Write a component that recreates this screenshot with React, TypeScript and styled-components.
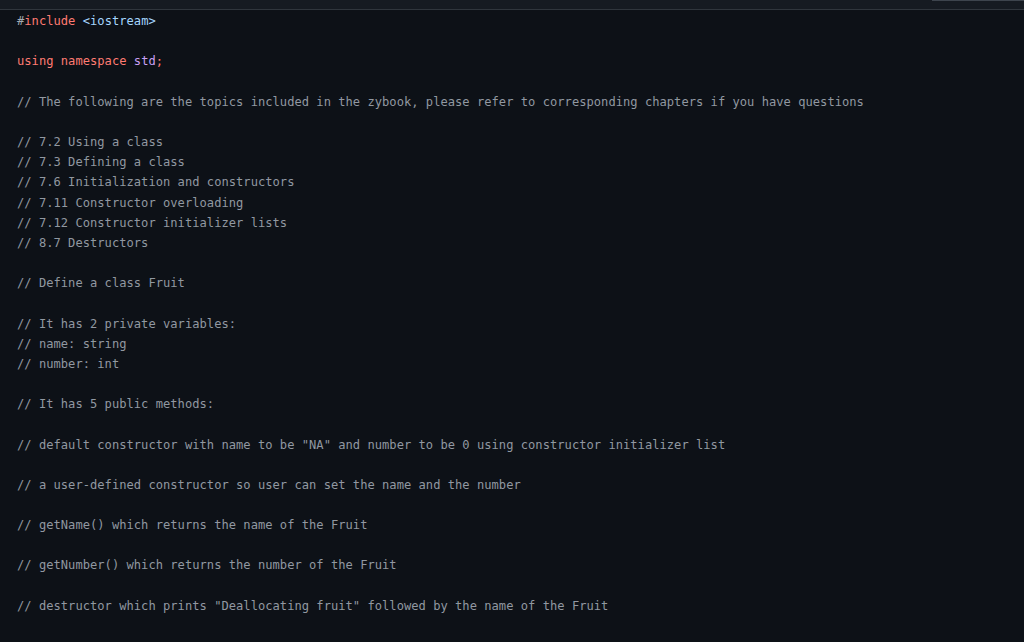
import React from "react";
import styled, { createGlobalStyle } from "styled-components";

const Global = createGlobalStyle`
  html, body { margin: 0; padding: 0; background: #0d1117; }
  body { width: 1024px; height: 642px; overflow: hidden; }
`;

const Page = styled.div`
  width: 1024px;
  height: 642px;
  background: #0d1117;
  display: flex;
  flex-direction: column;
`;

const TopBar = styled.div`
  height: 9px;
  background: #161b22;
  border-bottom: 1px solid #30363d;
  display: flex;
  justify-content: flex-end;
  align-items: flex-start;
`;

const TabEdge = styled.div`
  width: 92px;
  height: 1px;
  background: #3d444d;
`;

const Code = styled.pre`
  margin: 0;
  padding: 1px 17px 0;
  font-family: "DejaVu Sans Mono", "Liberation Mono", monospace;
  font-size: 12.1px;
  letter-spacing: 0.02px;
  line-height: 20.17px;
  color: #9198a1;
  white-space: pre;
`;

const Line = styled.div`
  min-height: 20.17px;
`;

const Tok = styled.span<{ $c: string }>`
  color: ${(p) => p.$c};
`;

const RED = "#ff7b72";
const BLUE = "#a5d6ff";
const PURPLE = "#c9a0f5";
const HASH = "#a3abb3";

const comments: string[] = [
  "// The following are the topics included in the zybook, please refer to corresponding chapters if you have questions",
  "",
  "// 7.2 Using a class",
  "// 7.3 Defining a class",
  "// 7.6 Initialization and constructors",
  "// 7.11 Constructor overloading",
  "// 7.12 Constructor initializer lists",
  "// 8.7 Destructors",
  "",
  "// Define a class Fruit",
  "",
  "// It has 2 private variables:",
  "// name: string",
  "// number: int",
  "",
  "// It has 5 public methods:",
  "",
  '// default constructor with name to be "NA" and number to be 0 using constructor initializer list',
  "",
  "// a user-defined constructor so user can set the name and the number",
  "",
  "// getName() which returns the name of the Fruit",
  "",
  "// getNumber() which returns the number of the Fruit",
  "",
  '// destructor which prints "Deallocating fruit" followed by the name of the Fruit',
];

export default function App() {
  return (
    <Page>
      <Global />
      <TopBar>
        <TabEdge />
      </TopBar>
      <Code>
        <Line>
          <Tok $c={HASH}>#</Tok>
          <Tok $c={RED}>include</Tok> <Tok $c={BLUE}>&lt;iostream&gt;</Tok>
        </Line>
        <Line />
        <Line>
          <Tok $c={RED}>using namespace</Tok> <Tok $c={PURPLE}>std</Tok>
          <Tok $c={RED}>;</Tok>
        </Line>
        <Line />
        {comments.map((c, i) => (
          <Line key={i}>{c}</Line>
        ))}
      </Code>
    </Page>
  );
}
